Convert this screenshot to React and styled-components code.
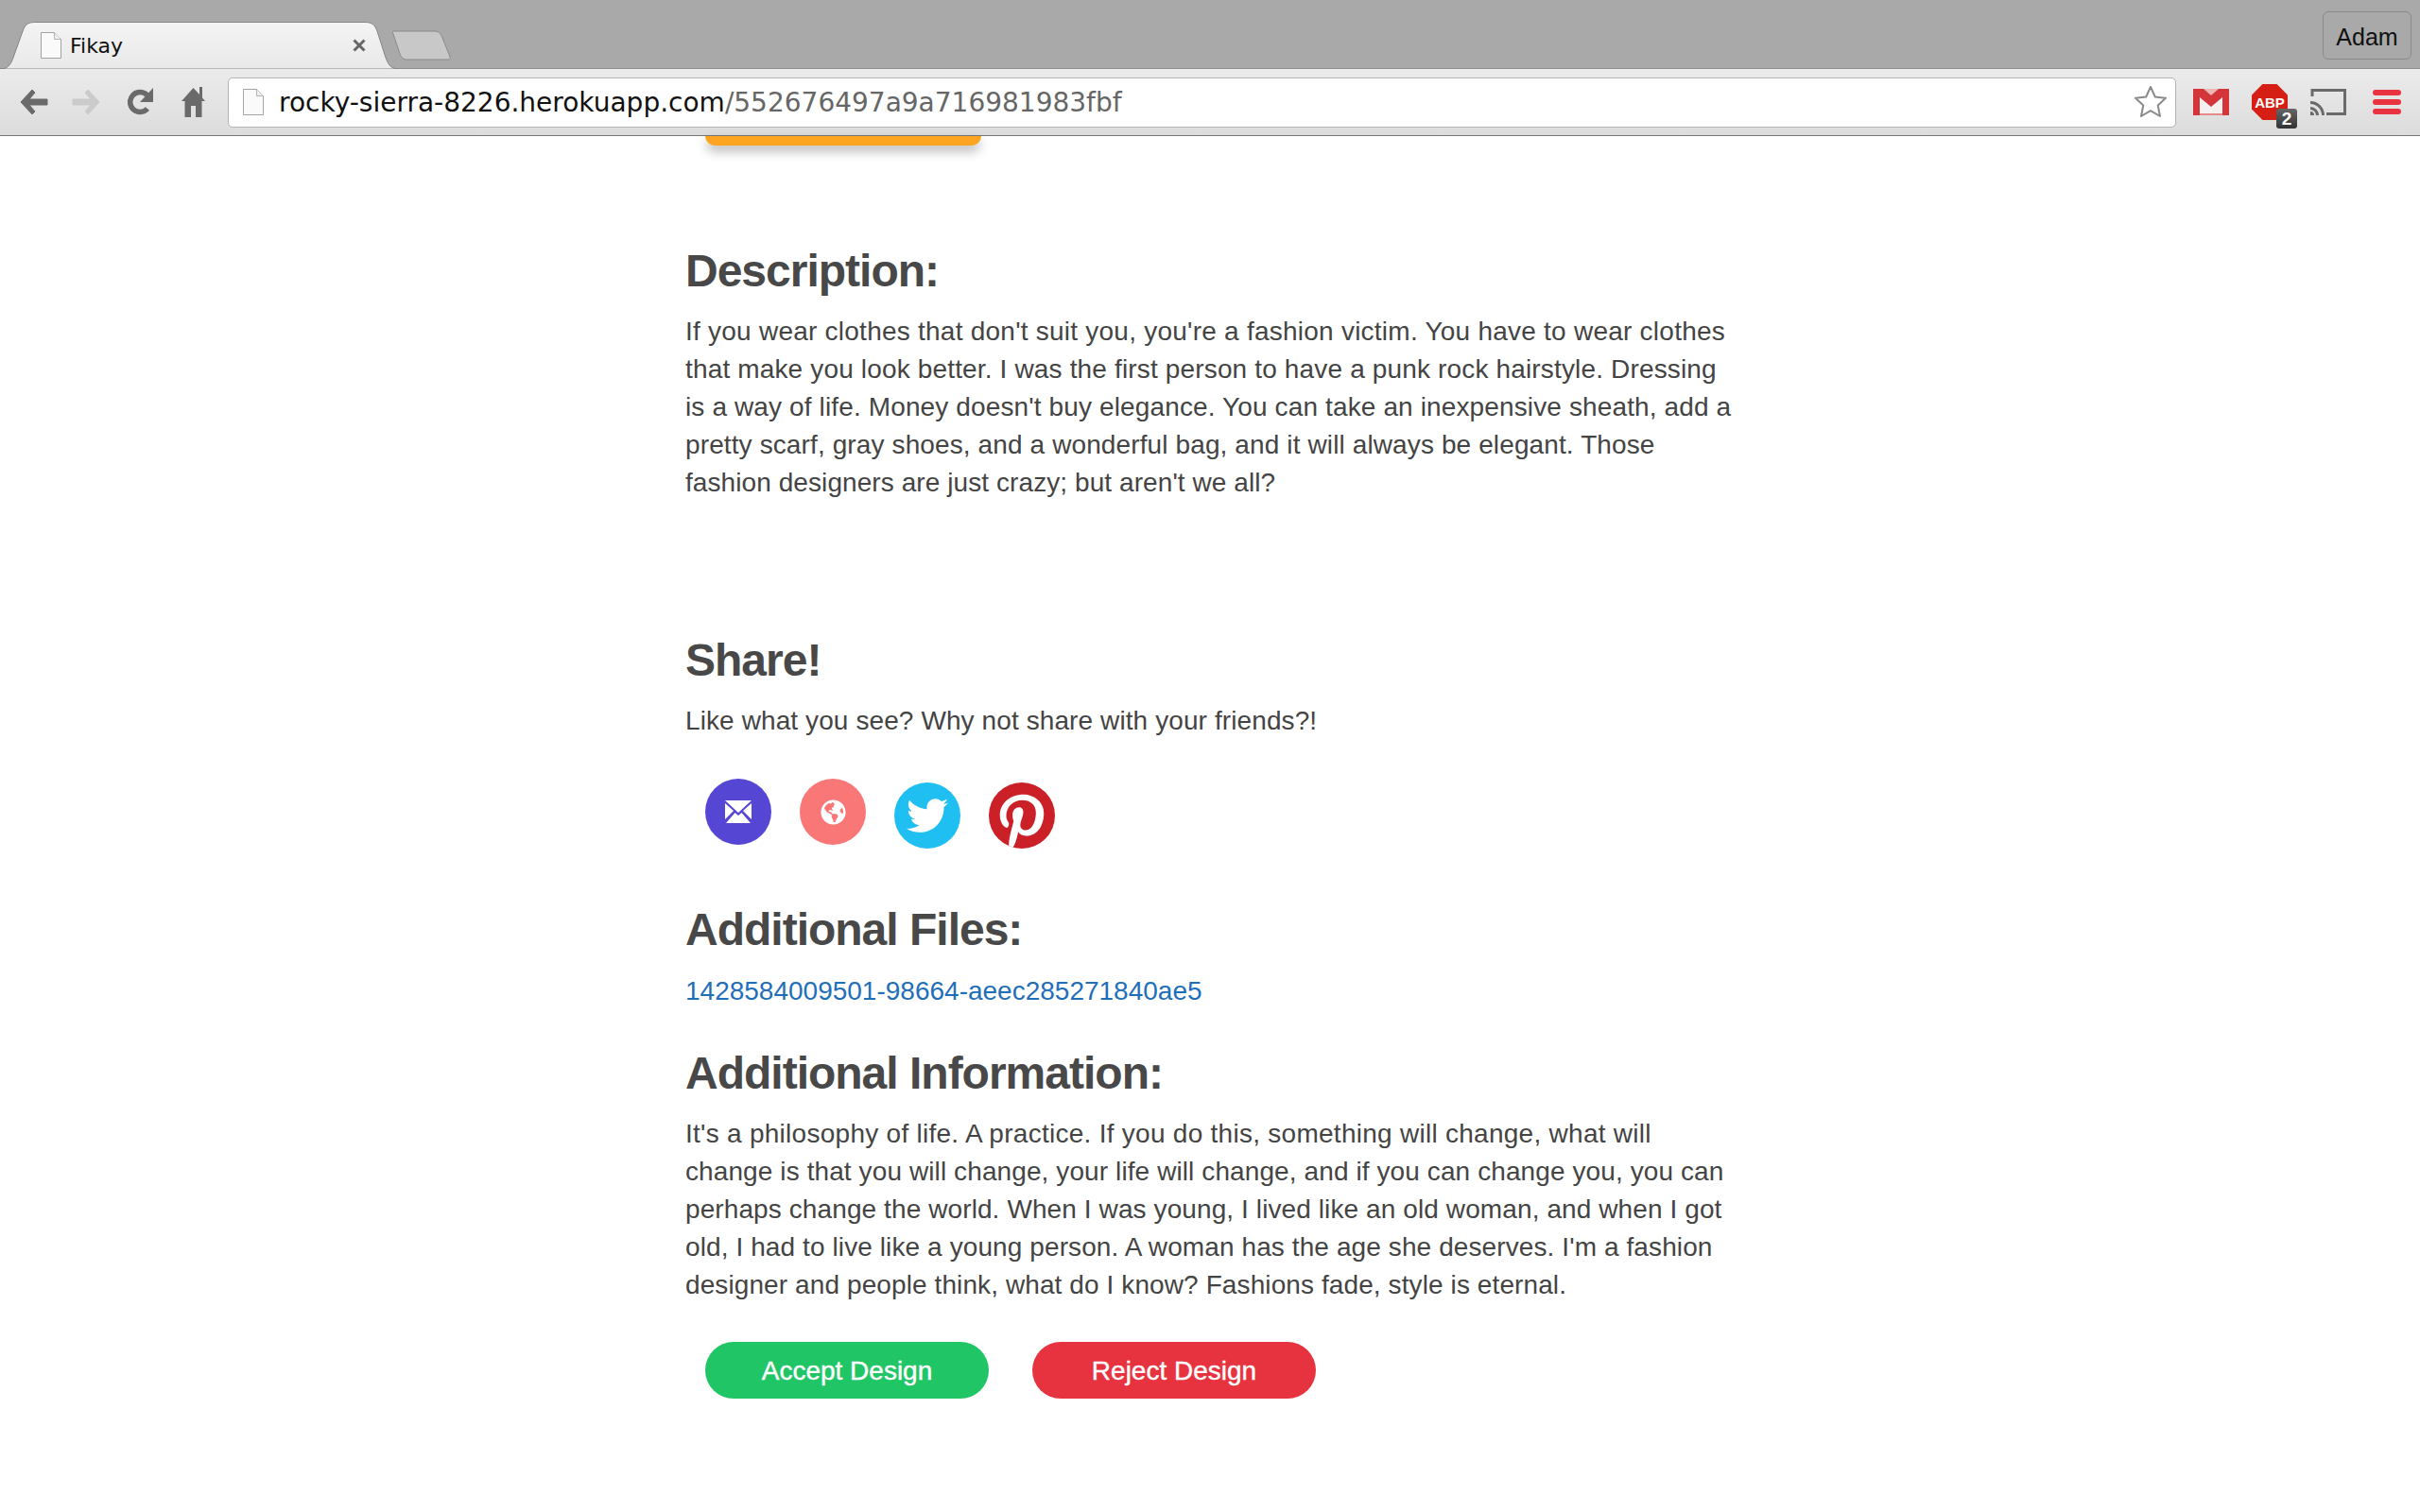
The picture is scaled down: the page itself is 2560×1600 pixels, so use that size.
import React from 'react';
import styled, { createGlobalStyle } from 'styled-components';
import { FaTwitter, FaPinterestP, FaGlobeAmericas } from 'react-icons/fa';

const GlobalStyle = createGlobalStyle`
  html, body { margin: 0; padding: 0; background: #fff; }
  body { height: 1600px; overflow: hidden; font-family: "Liberation Sans", Arial, sans-serif; }
`;

// Browser chrome
const TabStrip = styled.div`
  height: 72px;
  background: #a9a9a9;
  display: flex;
  align-items: flex-start;
  justify-content: space-between;
  border-bottom: 1px solid #8e8e8e;
`;

const Tabs = styled.div`
  display: flex;
  align-items: flex-start;
`;

const Tab = styled.div`
  position: relative;
  width: 422px;
  height: 50px;
  margin-top: 23px;
  display: flex;
  align-items: center;
  padding: 0 0 0 43px;
  box-sizing: border-box;
`;

const TabShape = styled.svg`
  position: absolute;
  left: 0;
  top: 0;
`;

const TabTitle = styled.span`
  position: relative;
  margin-left: 9px;
  font-family: "DejaVu Sans", sans-serif;
  font-size: 22px;
  color: #111;
  flex: 1;
`;

const TabClose = styled.svg`
  position: relative;
  margin-right: 35px;
`;

const NewTab = styled.svg`
  margin: 32px 0 0 -7px;
`;

const ProfileButton = styled.div`
  width: 94px;
  height: 51px;
  margin: 12px 9px 0 0;
  padding-top: 4px;
  box-sizing: border-box;
  border: 1px solid #8a8a8a;
  border-radius: 6px;
  display: flex;
  align-items: center;
  justify-content: center;
  font-size: 25px;
  color: #111;
`;

const Toolbar = styled.div`
  height: 70px;
  background: linear-gradient(#ebebeb, #dcdcdc);
  border-bottom: 1px solid #777;
  display: flex;
  align-items: center;
  padding-left: 20px;
`;

const NavIcon = styled.svg`
  flex: none;
  margin-right: ${(p) => p.$gap}px;
`;

const AddressBar = styled.div`
  width: 2061px;
  height: 53px;
  flex: none;
  box-sizing: border-box;
  background: #fff;
  border: 1px solid #b4b4b4;
  border-radius: 5px;
  display: flex;
  align-items: center;
  padding: 0 8px 0 15px;
  margin-right: 18px;
`;

const UrlText = styled.div`
  flex: 1;
  margin-left: 16px;
  font-family: "DejaVu Sans", sans-serif;
  font-size: 28px;
  color: #111;
  white-space: nowrap;
`;

const UrlPath = styled.span`
  color: #666;
`;

const Abp = styled.div`
  position: relative;
  width: 38px;
  height: 38px;
  flex: none;
  margin: 0 24px;
`;

const AbpOctagon = styled.div`
  width: 100%;
  height: 100%;
  background: #d61f14;
  clip-path: polygon(30% 0, 70% 0, 100% 30%, 100% 70%, 70% 100%, 30% 100%, 0 70%, 0 30%);
  color: #fff;
  font-size: 15px;
  font-weight: 700;
  display: flex;
  align-items: center;
  justify-content: center;
`;

const AbpBadge = styled.div`
  position: absolute;
  left: 26px;
  top: 26px;
  width: 22px;
  height: 21px;
  border-radius: 3px;
  background: linear-gradient(#666, #333);
  color: #fff;
  font-size: 19px;
  font-weight: 700;
  display: flex;
  align-items: center;
  justify-content: center;
`;

const Hamburger = styled.div`
  width: 30px;
  display: flex;
  flex-direction: column;
  gap: 4px;
  flex: none;
  margin-left: 28px;
`;

const HamburgerBar = styled.div`
  height: 6px;
  border-radius: 3px;
  background: #ea3340;
`;

// Page
const Page = styled.div`
  width: 1110px;
  margin: 0 auto;
`;

const SubmitStub = styled.div`
  width: 292px;
  height: 10px;
  margin-left: 21px;
  background: #fda521;
  border-radius: 0 0 20px 20px;
  box-shadow: 0 6px 12px rgba(0, 0, 0, 0.3);
`;

const Heading = styled.h2`
  margin: ${(p) => p.$top}px 0 0;
  font-size: 48px;
  line-height: 52px;
  font-weight: 700;
  color: #484848;
  letter-spacing: -1px;
`;

const Text = styled.p`
  margin: 18px 0 0;
  font-size: 28px;
  line-height: 40px;
  color: #444;
`;

const TextLine = styled.span`
  display: block;
  white-space: nowrap;
  letter-spacing: ${(p) => p.$spacing}px;
`;

const FileLink = styled.a`
  display: block;
  margin-top: 19px;
  font-size: 28px;
  line-height: 40px;
  color: #1f6fb8;
  text-decoration: none;
`;

const ShareRow = styled.div`
  display: flex;
  align-items: flex-start;
  gap: 30px;
  height: 74px;
  margin: 41px 0 0 21px;
`;

const ShareCircle = styled.div`
  width: 70px;
  height: 70px;
  margin-top: ${(p) => p.$drop || 0}px;
  border-radius: 50%;
  background: ${(p) => p.$bg};
  color: #fff;
  display: flex;
  align-items: center;
  justify-content: center;
  overflow: hidden;
`;

const PinterestGlyph = styled(FaPinterestP)`
  flex: none;
  margin-top: 16px;
`;

const ButtonRow = styled.div`
  display: flex;
  gap: 46px;
  margin: 40px 0 0 21px;
`;

const ActionButton = styled.button`
  width: 300px;
  height: 60px;
  padding-top: 2px;
  border: none;
  border-radius: 30px;
  background: ${(p) => p.$bg};
  color: #fff;
  font-family: "Liberation Sans", Arial, sans-serif;
  font-size: 28px;
  font-weight: 400;
  -webkit-text-stroke: 0.4px #fff;
`;

const description = [
  ["If you wear clothes that don't suit you, you're a fashion victim. You have to wear clothes", 0.24],
  ['that make you look better. I was the first person to have a punk rock hairstyle. Dressing', 0.155],
  ["is a way of life. Money doesn't buy elegance. You can take an inexpensive sheath, add a", 0.13],
  ['pretty scarf, gray shoes, and a wonderful bag, and it will always be elegant. Those', 0.117],
  ["fashion designers are just crazy; but aren't we all?", 0.08],
];

const information = [
  ["It's a philosophy of life. A practice. If you do this, something will change, what will", 0.27],
  ['change is that you will change, your life will change, and if you can change you, you can', 0.1],
  ['perhaps change the world. When I was young, I lived like an old woman, and when I got', 0.1],
  ["old, I had to live like a young person. A woman has the age she deserves. I'm a fashion", 0.1],
  ['designer and people think, what do I know? Fashions fade, style is eternal.', 0.1],
];

const PageIcon = ({ w = 22, h = 28 }) => (
  <svg width={w} height={h} viewBox="0 0 22 28" style={{ flex: 'none', position: 'relative' }}>
    <path d="M.5.5h14l7 7v20H.5z" fill="#fafafa" stroke="#a2a2a2" />
    <path d="M14.500.5v7h7" fill="#eee" stroke="#b5b5b5" />
  </svg>
);

const App = () => (
  <>
    <GlobalStyle />
    <TabStrip>
      <Tabs>
        <Tab>
          <TabShape width="422" height="50" viewBox="0 0 422 50">
            <defs>
              <linearGradient id="tabFill" x1="0" y1="0" x2="0" y2="1">
                <stop offset="0" stopColor="#f4f4f4" />
                <stop offset="1" stopColor="#e9e9e9" />
              </linearGradient>
            </defs>
            <path d="M0 50C8 50 11 46 14 38L24 10C27 2 30 .5 38 .5H385C393 .5 396 2 399 10L408 38C411 46 414 50 422 50Z" fill="url(#tabFill)" stroke="#858585" />
          </TabShape>
          <PageIcon />
          <TabTitle>Fikay</TabTitle>
          <TabClose width="14" height="14" viewBox="0 0 14 14">
            <path d="M1.500 1.500l11 11M12.500 1.500l-11 11" stroke="#666" strokeWidth="3" />
          </TabClose>
        </Tab>
        <NewTab width="62" height="32" viewBox="0 0 62 32">
          <path d="M1 1H44C49 1 51 3 53 8L61 28C62 31 60 31 58 31H16C11 31 10 29 8 25L1 4C0 2 0 1 1 1Z" fill="#c8c8c8" stroke="#8a8a8a" />
        </NewTab>
      </Tabs>
      <ProfileButton>Adam</ProfileButton>
    </TabStrip>
    <Toolbar>
      <NavIcon $gap={25} width="31" height="34" viewBox="0 0 31 34">
        <path d="M14 4L2 17l12 13 3-3-6-7h19v-6H11l6-7z" fill="#6a6a6a" stroke="#6a6a6a" strokeLinejoin="round" />
      </NavIcon>
      <NavIcon $gap={28} width="31" height="34" viewBox="0 0 31 34">
        <path d="M17 4l12 13-12 13-3-3 6-7H1v-6h19l-6-7z" fill="#cbcbcb" stroke="#cbcbcb" strokeLinejoin="round" />
      </NavIcon>
      <NavIcon $gap={30} width="27" height="36" viewBox="0 0 27 36">
        <path d="M21 25a10.500 10.500 0 1 1-.5-14.500" fill="none" stroke="#6a6a6a" strokeWidth="5.500" />
        <path d="M27 3v15H13z" fill="#6a6a6a" />
      </NavIcon>
      <NavIcon $gap={24} width="25" height="36" viewBox="0 0 25 36">
        <path d="M12.500 3L0 17h3.500v17H10V22h5v12h6.500V17H25l-3-3.500V2h-3v8z" fill="#6a6a6a" />
      </NavIcon>
      <AddressBar>
        <PageIcon />
        <UrlText>
          rocky-sierra-8226.herokuapp.com<UrlPath>/552676497a9a716981983fbf</UrlPath>
        </UrlText>
        <svg width="36" height="36" viewBox="0 0 36 36">
          <path d="M18 2l4.800 10.500 11.200 1.300-8.300 7.700 2.300 11.500-10-5.800-10 5.800 2.300-11.500L2 13.800l11.200-1.300z" fill="#fff" stroke="#8a8a8a" strokeWidth="2" strokeLinejoin="round" />
        </svg>
      </AddressBar>
      <svg width="38" height="28" viewBox="0 0 38 28" style={{ flex: 'none' }}>
        <rect width="38" height="28" fill="#d3353a" />
        <path d="M7 26V9l12 10L31 9v17z" fill="#f5f0f0" />
        <path d="M11 0h16L19 7z" fill="#eeb5b5" />
        <path d="M7 26h24v2H7z" fill="#e58a8a" />
      </svg>
      <Abp>
        <AbpOctagon>ABP</AbpOctagon>
        <AbpBadge>2</AbpBadge>
      </Abp>
      <svg width="38" height="28" viewBox="0 0 38 28" style={{ flex: 'none' }}>
        <path d="M2 8V1.500h34.500v25H17" fill="none" stroke="#6a6a6a" strokeWidth="3" />
        <path d="M0 13a15 15 0 0 1 15 15h-3A12 12 0 0 0 0 16zM0 19a9 9 0 0 1 9 9H6a6 6 0 0 0-6-6zM0 24a4 4 0 0 1 4 4H0z" fill="#6a6a6a" />
      </svg>
      <Hamburger>
        <HamburgerBar />
        <HamburgerBar />
        <HamburgerBar />
      </Hamburger>
    </Toolbar>

    <Page>
      <SubmitStub />
      <Heading $top={107}>Description:</Heading>
      <Text>
        {description.map(([line, spacing]) => (
          <TextLine key={line} $spacing={spacing}>{line}</TextLine>
        ))}
      </Text>
      <Heading $top={142}>Share!</Heading>
      <Text>
        <TextLine $spacing={0.1}>Like what you see? Why not share with your friends?!</TextLine>
      </Text>
      <ShareRow>
        <ShareCircle $bg="#5546d4">
          <svg width="28" height="24" viewBox="0 0 28 24">
            <path d="M0 0h28L14 13zM0 3v17l9-9zM28 3v17l-9-9zM1 24l9.500-11 3.500 3 3.500-3L27 24z" fill="#fff" />
          </svg>
        </ShareCircle>
        <ShareCircle $bg="#f97777">
          <FaGlobeAmericas size={27} />
        </ShareCircle>
        <ShareCircle $bg="#20bff2" $drop={4}>
          <FaTwitter size={44} />
        </ShareCircle>
        <ShareCircle $bg="#cb2027" $drop={4}>
          <PinterestGlyph size={62} />
        </ShareCircle>
      </ShareRow>
      <Heading $top={60}>Additional Files:</Heading>
      <FileLink href="#">1428584009501-98664-aeec285271840ae5</FileLink>
      <Heading $top={41}>Additional Information:</Heading>
      <Text>
        {information.map(([line, spacing]) => (
          <TextLine key={line} $spacing={spacing}>{line}</TextLine>
        ))}
      </Text>
      <ButtonRow>
        <ActionButton $bg="#20c565">Accept Design</ActionButton>
        <ActionButton $bg="#e6333f">Reject Design</ActionButton>
      </ButtonRow>
    </Page>
  </>
);

export default App;
